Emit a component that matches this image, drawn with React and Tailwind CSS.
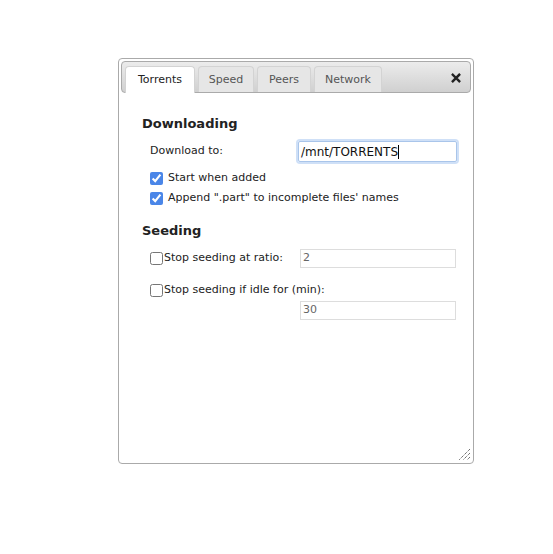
export default function App() {
  const font = { fontFamily: '"DejaVu Sans", Verdana, sans-serif' };
  return (
    <div className="w-[553px] h-[554px] bg-white" style={font}>
      <div className="pt-[58px] pl-[118px]">
        <div className="relative w-[356px] h-[406px] border border-[#aaaaaa] rounded-[4px] p-[2px] bg-white">
          {/* tab bar */}
          <div className="flex items-end h-[32px] pl-[3px] pr-[9px] rounded-[4px] border border-[#aaaaaa] bg-gradient-to-b from-[#ececec] to-[#d0d0d0]">
            <div className="flex gap-[3px] flex-1">
              <div className="h-[27px] w-[70px] pt-[1px] justify-center flex items-center text-[11px] text-[#222] bg-white border border-[#d3d3d3] border-b-0 rounded-t-[4px] mb-[-1px]">Torrents</div>
              <div className="h-[26px] w-[56px] pt-[2px] justify-center flex items-center text-[11px] text-[#555] bg-[#e6e6e6] border border-[#d3d3d3] border-b-0 rounded-t-[4px]">Speed</div>
              <div className="h-[26px] w-[54px] pt-[2px] justify-center flex items-center text-[11px] text-[#555] bg-[#e6e6e6] border border-[#d3d3d3] border-b-0 rounded-t-[4px]">Peers</div>
              <div className="h-[26px] w-[68px] pt-[2px] justify-center flex items-center text-[11px] text-[#555] bg-[#e6e6e6] border border-[#d3d3d3] border-b-0 rounded-t-[4px]">Network</div>
            </div>
            <div className="self-center mt-[2px]">
              <svg width="10" height="10" viewBox="0 0 10 10">
                <path d="M1.8 1.8 L8.2 8.2 M8.2 1.8 L1.8 8.2" stroke="#222" strokeWidth="2.4" strokeLinecap="square" />
              </svg>
            </div>
          </div>

          {/* content */}
          <div className="pl-[21px] pr-[14px] pt-[22px] text-[11px] text-[#222]">
            <h3 className="text-[13px] font-bold h-[18px] leading-[18px]">Downloading</h3>
            <div className="flex items-center h-[21px] mt-[8px] pl-[8px]">
              <label className="w-[148px]">Download to:</label>
              <div className="w-[159px] h-[21px] border border-[#a9c5ea] rounded-[2px] shadow-[0_0_0_2px_#cfe0f7] flex items-center px-[2px] text-[12px] text-[#111]">
                /mnt/TORRENTS<span className="w-px h-[14px] bg-black" />
              </div>
            </div>
            <div className="flex items-center h-[16px] mt-[8px] pl-[8px]">
              <input type="checkbox" defaultChecked className="m-0 w-[13px] h-[13px] mr-[5px] accent-[#4a86e8]" />
              <span>Start when added</span>
            </div>
            <div className="flex items-center h-[16px] mt-[4px] pl-[8px]">
              <input type="checkbox" defaultChecked className="m-0 w-[13px] h-[13px] mr-[5px] accent-[#4a86e8]" />
              <span>Append ".part" to incomplete files' names</span>
            </div>

            <h3 className="text-[13px] font-bold h-[18px] leading-[18px] mt-[16px]">Seeding</h3>
            <div className="flex items-center h-[19px] mt-[9px] pl-[8px]">
              <input type="checkbox" className="m-0 w-[13px] h-[13px] mr-[1px]" />
              <label className="w-[136px]">Stop seeding at ratio:</label>
              <div className="w-[156px] h-[19px] border border-[#dddddd] flex items-center px-[2px] text-[#666]">2</div>
            </div>
            <div className="flex items-center h-[16px] mt-[14px] pl-[8px]">
              <input type="checkbox" className="m-0 w-[13px] h-[13px] mr-[1px]" />
              <label>Stop seeding if idle for (min):</label>
            </div>
            <div className="flex mt-[3px] pl-[158px]">
              <div className="w-[156px] h-[19px] border border-[#dddddd] flex items-center px-[2px] text-[#666]">30</div>
            </div>
          </div>

          {/* resize grip */}
          <svg className="absolute right-[2px] bottom-[2px]" width="13" height="13" viewBox="0 0 13 13">
            <path d="M12 1 L1 12 M12 5 L5 12 M12 9 L9 12" stroke="#333" strokeWidth="1" strokeDasharray="1 1" />
          </svg>
        </div>
      </div>
    </div>
  );
}
